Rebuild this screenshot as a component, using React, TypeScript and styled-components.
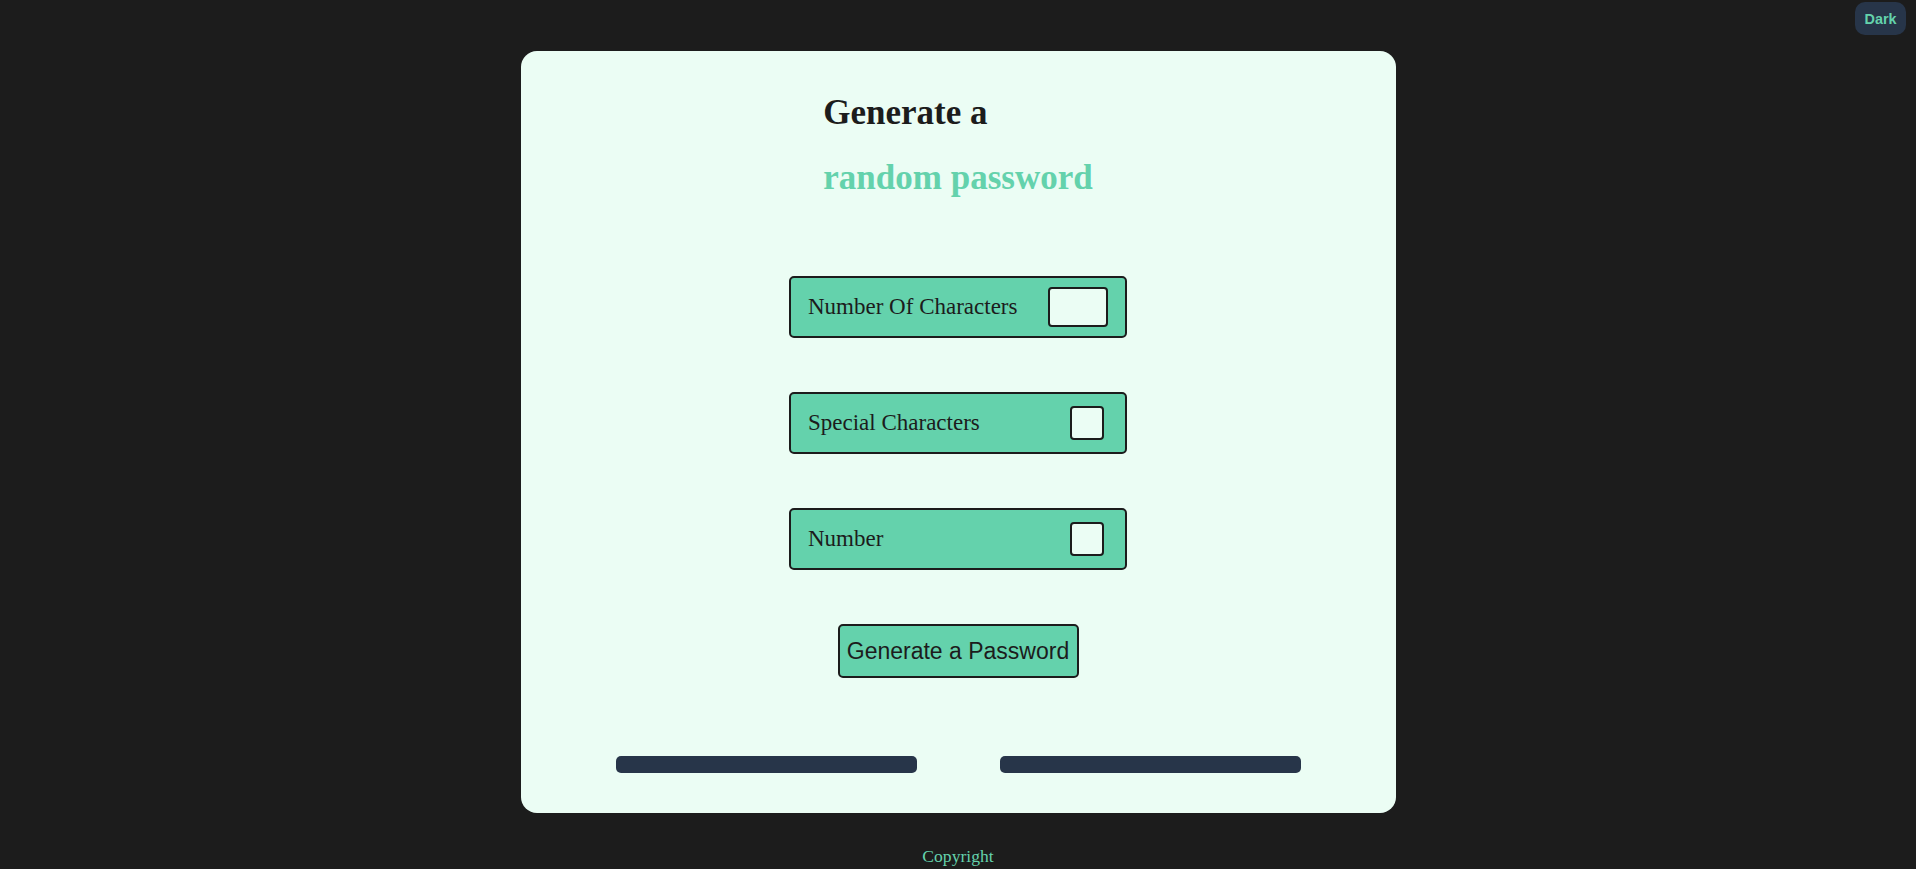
import React from "react";
import styled, { createGlobalStyle } from "styled-components";

const GlobalStyle = createGlobalStyle`
  html, body {
    margin: 0;
    padding: 0;
    background: #1c1c1c;
  }
  body {
    font-family: "Liberation Serif", "Times New Roman", serif;
  }
  * { box-sizing: border-box; }
`;

const Page = styled.div`
  min-height: 869px;
  display: flex;
  flex-direction: column;
  align-items: center;
`;

const TopBar = styled.header`
  align-self: stretch;
  display: flex;
  justify-content: flex-end;
  padding: 2px 10px 0 0;
`;

const ThemeToggle = styled.button`
  height: 33px;
  padding: 0 9.5px;
  border: none;
  border-radius: 10px;
  background: #273549;
  color: #64d2ac;
  font-family: "Liberation Sans", Arial, sans-serif;
  font-weight: 700;
  font-size: 14.4px;
  cursor: pointer;
`;

const Card = styled.main`
  margin-top: 16px;
  width: 875px;
  height: 762px;
  background: #ebfdf4;
  border-radius: 16px;
  padding: 42px 0 40px;
  display: flex;
  flex-direction: column;
  align-items: center;
`;

const Heading = styled.h1`
  margin: 0;
  display: flex;
  flex-direction: column;
  gap: 25px;
  font-size: 35px;
  line-height: 40px;
  font-weight: 700;
  color: #1c1c1c;
`;

const Accent = styled.span`
  color: #64d2ac;
`;

const Options = styled.div`
  margin-top: 78px;
  display: flex;
  flex-direction: column;
  gap: 54px;
`;

const OptionRow = styled.label`
  width: 338px;
  height: 62px;
  display: flex;
  align-items: center;
  justify-content: space-between;
  padding: 0 17px;
  background: #64d2ac;
  border: 2px solid #1c1c1c;
  border-radius: 5px;
  font-size: 23px;
  color: #1c1c1c;
`;

const CountInput = styled.input`
  width: 60px;
  height: 40px;
  background: #ebfdf4;
  border: 2px solid #1c1c1c;
  border-radius: 4px;
  font-family: inherit;
  font-size: 18px;
  padding: 0 6px;
  outline: none;
`;

const Check = styled.input`
  appearance: none;
  -webkit-appearance: none;
  margin: 0 4px 0 0;
  width: 34px;
  height: 34px;
  background: #ebfdf4;
  border: 2px solid #1c1c1c;
  border-radius: 4px;
  cursor: pointer;
`;

const GenerateButton = styled.button`
  margin-top: 54px;
  height: 54px;
  width: 241px;
  padding: 0;
  background: #64d2ac;
  border: 2px solid #1c1c1c;
  border-radius: 5px;
  font-family: "Liberation Sans", Arial, sans-serif;
  font-size: 23px;
  color: #1c1c1c;
  cursor: pointer;
`;

const Outputs = styled.div`
  margin-top: 78px;
  display: grid;
  grid-template-columns: 301px 301px;
  column-gap: 83px;
`;

const OutputBar = styled.div`
  height: 17px;
  background: #273549;
  border-radius: 5px;
`;

const Footer = styled.footer`
  margin-top: 33px;
  font-size: 17.6px;
  color: #64d2ac;
`;

export default function App() {
  return (
    <>
      <GlobalStyle />
      <Page>
        <TopBar>
          <ThemeToggle>Dark</ThemeToggle>
        </TopBar>
        <Card>
          <Heading>
            <span>Generate a</span>
            <Accent>random password</Accent>
          </Heading>
          <Options>
            <OptionRow>
              Number Of Characters
              <CountInput type="text" />
            </OptionRow>
            <OptionRow>
              Special Characters
              <Check type="checkbox" />
            </OptionRow>
            <OptionRow>
              Number
              <Check type="checkbox" />
            </OptionRow>
          </Options>
          <GenerateButton>Generate a Password</GenerateButton>
          <Outputs>
            <OutputBar />
            <OutputBar />
          </Outputs>
        </Card>
        <Footer>Copyright</Footer>
      </Page>
    </>
  );
}
